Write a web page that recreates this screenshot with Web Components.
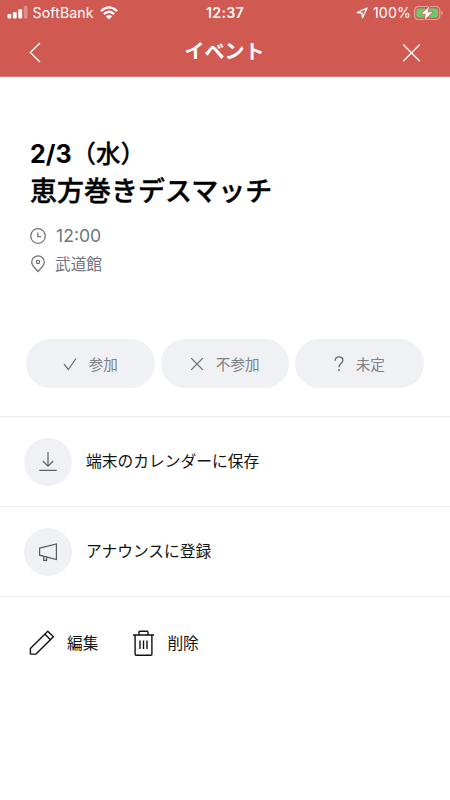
<!DOCTYPE html>
<html lang="ja">
<head>
<meta charset="utf-8">
<title>イベント</title>
<style>
html,body{margin:0;height:100%;background:#fff}
body{font-family:Inter,"Noto Sans CJK JP",sans-serif;color:#000;overflow:hidden}
</style>
</head>
<body>
<event-screen></event-screen>
<script>
const define = (name, html) => customElements.define(name, class extends HTMLElement {
  constructor() {
    super();
    const t = document.createElement('template');
    t.innerHTML = html;
    this.attachShadow({mode: 'open'}).append(t.content.cloneNode(true));
  }
});

define('status-bar', `
<style>
:host{display:grid;grid-template-columns:1fr auto 1fr;align-items:center;height:25px;color:#fff;line-height:25px}
.l,.r{display:flex;align-items:center}
.l{padding-left:7px}
.r{justify-content:flex-end;padding-right:6px}
.carrier{font-size:14.2px;margin-left:4.5px;letter-spacing:.1px}
.time{font-size:14.2px;font-weight:600;letter-spacing:.3px}
.pct{font-size:14.2px;margin:0 3px 0 5px;letter-spacing:.1px}
svg{display:block}
</style>
<div class="l">
<svg width="21" height="13" viewBox="0 0 21 13" fill="#fff"><rect x=".5" y="8" width="3.8" height="4.5" rx="1"/><rect x="5.9" y="6" width="3.8" height="6.5" rx="1"/><rect x="11.3" y="3.2" width="3.8" height="9.3" rx="1"/><rect x="16.7" y="0" width="3.8" height="12.5" rx="1" opacity=".32"/></svg>
<span class="carrier">SoftBank</span>
<svg style="margin-left:6px" width="18" height="14" viewBox="0 0 18 14"><g fill="none" stroke="#fff" stroke-width="2.3"><path d="M1 5.2Q9-2.4 17 5.2"/><path d="M3.9 8.2Q9 3.3 14.1 8.2"/></g><path d="M5.9 10.3Q9 7.7 12.1 10.3L9 13.5Z" fill="#fff"/></svg>
</div>
<span class="time">12:37</span>
<div class="r">
<svg width="12" height="12" viewBox="0 0 12 12"><path d="M1.2 5.7 11 1 6.5 10.8 6 6Z" fill="none" stroke="#fff" stroke-width="1.3" stroke-linejoin="round"/></svg>
<span class="pct">100%</span>
<svg width="30" height="16" viewBox="0 0 30 16"><rect x=".6" y="1.5" width="25.2" height="13" rx="3.8" fill="none" stroke="#fff" stroke-opacity=".45" stroke-width="1.2"/><rect x="2.5" y="3.4" width="21.5" height="9.2" rx="2" fill="#5fd266"/><path d="M27.4 6v4q1.5-.5 1.5-2t-1.5-2" fill="#fff" opacity=".45"/><path d="M15.6.4 6.6 9.2h4.6L10 15.6 19.6 6.8H14.4Z" fill="#fff" stroke="#d05a52" stroke-width=".9"/></svg>
</div>`);

define('nav-bar', `
<style>
:host{display:grid;grid-template-columns:1fr auto 1fr;height:51px;align-items:start;color:#fff}
.title{font-size:20px;font-weight:700;line-height:30px;padding-top:12px;margin-left:-1px}
.b{padding:17px 0 0 28px}
.x{justify-self:end;padding:18px 29px 0 0}
svg{display:block}
</style>
<div class="b"><svg width="14" height="22" viewBox="0 0 14 22"><path d="M12 1 2.3 10.5 12 20" fill="none" stroke="#fff" stroke-width="1.3"/></svg></div>
<div class="title"><slot></slot></div>
<div class="x"><svg width="19" height="20" viewBox="0 0 19 20"><path d="M1.2 1.5 17.8 18.2M17.8 1.5 1.2 18.2" stroke="#fff" stroke-width="1.3"/></svg></div>`);

define('meta-line', `
<style>
:host{display:flex;align-items:center;height:28px;padding-left:29px;gap:9px;color:#72757b;font-size:15.7px;line-height:28px}
.t{padding-top:var(--drop,0)}
::slotted(svg){display:block;flex:none}
</style><slot name="icon"></slot><span class="t"><slot></slot></span>`);

define('answer-button', `
<style>
:host{display:flex;box-sizing:border-box;width:128.5px;height:49px;border-radius:25px;background:#f0f1f5;align-items:center;color:#7d8085;font-size:14.6px;line-height:24px;justify-content:center;gap:12px}
.t{padding-top:2px}
::slotted(svg){display:block;flex:none}
</style><slot name="icon"></slot><span class="t"><slot></slot></span>`);

define('action-row', `
<style>
:host{display:flex;box-sizing:border-box;height:90px;border-top:1px solid #ebebec;align-items:center;padding-left:24px;font-size:15.75px;line-height:24px;color:#111;gap:14px}
.c{display:grid;place-items:center;width:48px;height:48px;border-radius:50%;background:#f0f1f5}
::slotted(svg){display:block}
</style><div class="c"><slot name="icon"></slot></div><div class="t"><slot></slot></div>`);

define('tool-link', `
<style>
:host{display:flex;align-items:center;font-size:15.7px;line-height:28px;color:#111;gap:11px}
.t{padding-top:3px}
::slotted(svg){display:block}
</style><slot name="icon"></slot><span class="t"><slot></slot></span>`);

define('event-screen', `
<style>
:host{display:flex;flex-direction:column;width:450px;height:800px;background:#fff}
header{background:#d05a52;border-bottom:1px solid #d87a73;height:76px}
h1{margin:58px 0 0;padding-left:30px;font-weight:700;font-size:27px;line-height:38px;height:77px}
.d{display:block;font-size:25px;height:38px}
.w{font-size:24.5px;font-weight:500;-webkit-text-stroke:.3px #000}
.t{display:block;font-weight:500;-webkit-text-stroke:.4px #000}
.meta{margin-top:10px}
.answers{display:flex;gap:6px;margin:61px 0 0 26px}
.rows{margin-top:28px;border-bottom:1px solid #ebebec}
.tools{display:flex;margin:30px 0 0 29px;gap:34px}
</style>
<header><status-bar></status-bar><nav-bar>イベント</nav-bar></header>
<h1><span class="d">2/3<span class="w">（水）</span></span><span class="t">恵方巻きデスマッチ</span></h1>
<div class="meta">
<meta-line style="font-size:17.6px"><svg slot="icon" width="18" height="18" viewBox="0 0 18 18" fill="none" stroke="#72757b" stroke-width="1.3"><circle cx="9" cy="9" r="7.3"/><path d="M8.8 5.5V9.6H12"/></svg>12:00</meta-line>
<meta-line style="--drop:2px;gap:8px"><svg slot="icon" width="18" height="18" viewBox="0 0 18 18" fill="none" stroke="#72757b" stroke-width="1.3" stroke-linejoin="round"><path d="M9 16.7C7 14 2.7 10.6 2.7 7.2a6.3 6.3 0 0 1 12.6 0C15.3 10.6 11 14 9 16.7Z"/><circle cx="9" cy="7" r="1.6"/></svg>武道館</meta-line>
</div>
<div class="answers">
<answer-button><svg slot="icon" width="14" height="14" viewBox="0 0 14 14" fill="none" stroke="#66696e" stroke-width="1.2"><path d="M1 7.2 5.3 12.5 13 1.5"/></svg>参加</answer-button>
<answer-button><svg slot="icon" width="14" height="14" viewBox="0 0 14 14" stroke="#66696e" stroke-width="1.2"><path d="M1.2 1.2 12.8 12.8M12.8 1.2 1.2 12.8"/></svg>不参加</answer-button>
<answer-button><svg slot="icon" width="10" height="16" viewBox="0 0 10 16" fill="none" stroke="#66696e" stroke-width="1.3"><path d="M1.1 4.8C1.1-.4 8.9-.4 8.9 4.2 8.9 7.3 5 7.3 5 11.2"/><path d="M5 13.2v1.8" stroke-width="1.6"/></svg>未定</answer-button>
</div>
<div class="rows">
<action-row><svg slot="icon" width="20" height="20" viewBox="0 0 20 20" fill="none" stroke="#5f6267" stroke-width="1.2"><path d="M10 0V14M4.8 9 10 14.2 15.2 9M1.3 18.3H18.7"/></svg>端末のカレンダーに保存</action-row>
<action-row><svg slot="icon" width="20" height="18" viewBox="0 0 20 18" fill="none" stroke="#55585d" stroke-width="1.2"><path d="M1.6 5.2 18.4 1V16.5L1.6 12.2ZM5.7 13.3V17.3H8.6V14"/></svg>アナウンスに登録</action-row>
</div>
<div class="tools">
<tool-link><svg slot="icon" width="27" height="28" viewBox="0 0 27 28" fill="none" stroke="#111" stroke-width="1.4" stroke-linejoin="round"><path d="M1.4 19.5 18.8 2.2 24.4 7.7 7 25.1H1.4ZM16 5.2 21.5 10.7"/></svg>編集</tool-link>
<tool-link style="gap:12px"><svg slot="icon" width="23" height="28" viewBox="0 0 23 28" fill="none" stroke="#111" stroke-width="1.4"><path d="M1 6H22M3.1 6V25.3Q3.1 26.3 4.1 26.3H18.9Q19.9 26.3 19.9 25.3V6M7 6V3.3Q7 2.3 8 2.3H15Q16 2.3 16 3.3V6M8 11.5V20M11.5 11.5V20M15 11.5V20"/></svg>削除</tool-link>
</div>`);
</script>
</body>
</html>
